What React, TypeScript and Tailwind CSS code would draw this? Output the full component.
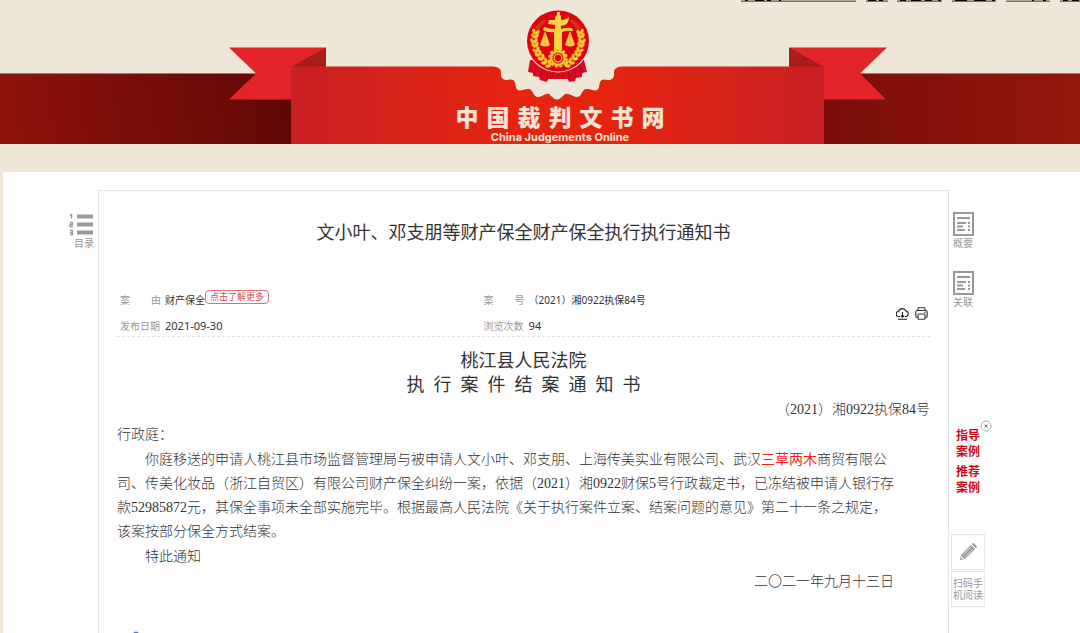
import type { ReactNode } from "react";

const siteName = ["中", "国", "裁", "判", "文", "书", "网"];
const grains = [
    [-10, 23, 66], [-14, 20, 55], [-17, 16, 45], [-20, 12, 35], [-22, 8, 24], [-23, 3, 12], [-24, -1, 2], [-23, -6, -8], [-22, -10, -14],
];

function Wreath() {
    return (
        <g fill="#f6c52c">
            {grains.map(([x, y, turn]) => (
                <g key={`${x},${y}`} transform={`translate(${x} ${y}) rotate(${-turn})`}>
                    <ellipse cx="-2" cy="0" rx="1.7" ry="2.9" transform="rotate(-32)" />
                    <ellipse cx="2" cy="0" rx="1.7" ry="2.9" transform="rotate(32)" />
                </g>
            ))}
        </g>
    );
}

function Emblem() {
    return (
        <g transform="translate(558 41)">
            <path d="M-28 19 L-30 31 L-25 32 L-25 35 L-19 36 L-18 39 L-11 41 L-10 38 L10 38 L11 41 L17 40 L18 37 L24 36 L24 32 L29 31 L26 19Z" fill="#d80b24" />
            <path d="M-22 25 L-24 33 M-16 28 L-17 36 M-10 31 L-11 39 M-5 32 V38 M0 32 V38 M5 32 V38 M10 31 L11 39 M16 28 L17 36 M22 25 L24 33" stroke="#a90d1c" strokeWidth="1" />
            <ellipse rx="32" ry="31.500" fill="#f5e9dc" />
            <ellipse rx="31" ry="30.500" fill="#e3000f" />
            <path d="M-23 -13 L-16 -21 H-11 L-20 -10Z M23 -13 L16 -21 H11 L20 -10Z" fill="#c9371c" />
            <Wreath />
            <g transform="scale(-1 1)">
                <Wreath />
            </g>
            <g fill="#f8d53c">
                <path d="M-1 -29 H2 V-26 L3 -25 V-21 Q8 -21 11 -24 Q11 -18 7 -16 L3 -15 V-12 Q9 -14 14 -13 L15 -10 Q9 -11 4 -9 V12 H-4 V-9 Q-9 -8 -15 -11 L-14 -14 Q-8 -12 -3 -12 V-16 L-10 -17 L-9 -21 H-3 V-24 L-1 -26Z" />
                <path d="M-13 -10 L-18 4 Q-13 7 -8 4Z M12 -10 L7 4 Q12 7 17 4Z" />
            </g>
            <path d="M-13 -5 V4 M12 -5 V4" stroke="#e8ac2c" strokeWidth="1" />
            <circle cy="17" r="8.500" fill="#e3000f" stroke="#f6c52c" strokeWidth="2.500" strokeDasharray="3 1.450" />
            <circle cy="17" r="8" fill="#f6c52c" />
            <circle cy="17" r="5.500" fill="#e3000f" />
            <circle cy="17" r="3.800" fill="none" stroke="#f6c52c" strokeWidth="1.300" />
        </g>
    );
}

function Ribbon() {
    return (
        <svg viewBox="229 0 658 144" className="h-36 w-[658px]" aria-hidden="true">
            <defs>
                <linearGradient id="front" x1="0" x2="1">
                    <stop offset="0" stopColor="#c92022" />
                    <stop offset=".4" stopColor="#e52411" />
                    <stop offset=".6" stopColor="#e62410" />
                    <stop offset="1" stopColor="#c82023" />
                </linearGradient>
            </defs>
            <path d="M229 47.500 H326 V67 H292 V99.500 H229 L256 73.500Z" fill="#e32428" />
            <path d="M887 47.500 H789 V67 H824 V99.500 H886 L860 73.500Z" fill="#e32428" />
            <path d="M326 47.500 V67 H291Z" fill="#a81c1b" />
            <path d="M789 47.500 V67 H824Z" fill="#a81c1b" />
            <rect x="492" y="66" width="131" height="36" fill="#eee7d8" />
            <path
                d="M291 66.500 H493 Q501 67 501 72 Q500 80 507 80 C515 78 515 82 516 87 C518 94 524 88 529 89 C534 90 533 98 539 97 C544 96 548 91 551 96 Q557 103 563 96 C567 91 571 96 576 97 C582 98 581 90 586 89 C591 88 597 94 599 87 C600 82 600 78 608 80 Q615 80 614 72 Q614 67 622 66.500 H824 V144 H291Z"
                fill="url(#front)"
            />
            <Emblem />
        </svg>
    );
}

function CutLinks() {
    const links = [[1, 115], [126, 22], [157, 45], [212, 44], [266, 44], [320, 20]];
    const ink = [[5, 3], [15, 9], [27, 4], [39, 2], [128, 8], [139, 4], [160, 6], [171, 10], [185, 7], [198, 3], [215, 12], [234, 12], [252, 3], [292, 2], [303, 3], [323, 5], [332, 7]];
    return (
        <svg viewBox="0 0 340 2" className="absolute right-0 top-0 h-0.5 w-[340px]" aria-hidden="true">
            {links.map(([x, w]) => (
                <g key={x}>
                    <rect x={x} width={w} height="1" fill="#a9a494" />
                    <rect x={x} y="1" width={w} height="1" fill="#777266" />
                </g>
            ))}
            {ink.map(([x, w]) => <rect key={x} x={x} width={w} height="1" fill="#000" />)}
        </svg>
    );
}

function Header() {
    return (
        <header className="relative flex h-36 flex-col justify-end overflow-hidden">
            <CutLinks />
            <div className="flex h-[71px] border-t border-[#9c7c6c]">
                <div className="flex-1 bg-[linear-gradient(80deg,#8f130b,#5e0706_56%)]" />
                <div className="flex-1 bg-[linear-gradient(90deg,#780e0a_52%,#94170b)]" />
            </div>
            <div className="absolute inset-0 flex justify-center pl-9">
                <Ribbon />
            </div>
            <div className="absolute inset-x-0 bottom-0 flex flex-col items-center pl-10 text-[#f3e3d3]">
                <h1 className="flex gap-2 font-['Noto_Sans_CJK_SC',sans-serif] text-[23px] font-black leading-7">
                    {siteName.map((char) => <span key={char}>{char}</span>)}
                </h1>
                <p className="font-['Inter',sans-serif] text-[11px] font-bold leading-[14px]">China Judgements Online</p>
            </div>
        </header>
    );
}

function ListIcon() {
    return (
        <svg viewBox="0 0 25 24" className="h-6 w-[25px]" fill="none" stroke="#999" aria-hidden="true">
            <path d="M8 4.500H24M8 12.500H24M8 20.500H24" strokeWidth="4" />
            <path d="M1 3.500L2.500 2.500V6.500M1 10.500H3.500V12.500H1V14.500H4M1 18.500H3.500V22.500H1M1 20.500H3.500" strokeWidth="1.300" />
        </svg>
    );
}

function SheetIcon() {
    return (
        <svg viewBox="0 0 21 24" className="h-6 w-[21px]" fill="none" stroke="#999" aria-hidden="true">
            <rect x="1" y="1" width="19" height="22" strokeWidth="2" />
            <path d="M4 6H17M4 11H13M15 11H17M4 14.500H10M15 14.500H17M4 18H12M15 18H17" strokeWidth="2" />
        </svg>
    );
}

function PencilIcon() {
    return (
        <svg viewBox="0 0 18 18" className="size-[18px]" aria-hidden="true">
            <path d="M1 17L2 12L12 2L16 6L6 16Z" fill="#999" />
            <path d="M13 1L14 0Q15 0 18 4L17 5Z" fill="#888" />
            <path d="M4 12L12 4M6 14L14 6" stroke="#ddd" strokeWidth="1" />
            <path d="M2.500 12.500L5.500 15.500L3 16L2 15Z" fill="#e5e5e5" />
        </svg>
    );
}

function RailLink({ label, children }: { label: string; children: ReactNode }) {
    return (
        <a href="#" className="flex flex-col items-start text-[10px] leading-[14px] text-[#999]">
            {children}
            {label}
        </a>
    );
}

function Meta() {
    return (
        <div className="flex items-center border-b border-dashed border-[#e2e2e2] pl-[3px] pr-0.5 text-[10px] text-[#333]">
            <dl className="flex w-[45%] flex-col gap-1.5 leading-5">
                <div className="flex gap-1">
                    <dt className="flex w-[41px] justify-between text-[#999]"><span>案</span><span>由</span></dt>
                    <dd className="flex items-start">
                        财产保全
                        <a href="#" className="rounded-sm border border-[#e07070] px-1 text-[9px] leading-3 text-[#cf4a4a]">点击了解更多</a>
                    </dd>
                </div>
                <div className="flex gap-1">
                    <dt className="w-[41px] text-[#999]">发布日期</dt>
                    <dd className="text-[11px]">2021-09-30</dd>
                </div>
            </dl>
            <dl className="flex flex-1 flex-col gap-1.5 leading-5">
                <div className="flex gap-1">
                    <dt className="flex w-[41px] justify-between text-[#999]"><span>案</span><span>号</span></dt>
                    <dd>（2021）湘0922执保84号</dd>
                </div>
                <div className="flex gap-1">
                    <dt className="w-[41px] text-[#999]">浏览次数</dt>
                    <dd className="text-[11px]">94</dd>
                </div>
            </dl>
            <div className="flex gap-1.5">
                <button type="button" aria-label="下载">
                    <svg viewBox="0 0 13 13" className="size-[13px]" fill="none" stroke="#222" strokeWidth="1.100">
                        <path d="M4 9.500H3A2.500 2.500 0 0 1 2.500 4.500A4 4 0 0 1 10 4A2.800 2.800 0 0 1 10 9.500H9M6.500 5V10M4.800 8.500L6.500 10.200L8.200 8.500M2 12.300H11" />
                    </svg>
                </button>
                <button type="button" aria-label="打印">
                    <svg viewBox="0 0 13 13" className="size-[13px]" fill="none" stroke="#333" strokeWidth="1.100">
                        <path d="M3 3.500V1.500Q3 .8 3.700 .8H9.300Q10 .8 10 1.500V3.500M3 10.500H2Q.8 10.500 .8 9.300V5Q.8 3.500 2.300 3.500H10.700Q12.200 3.500 12.200 5V9.300Q12.200 10.500 11 10.500H10" />
                        <rect x="3" y="7" width="7" height="5.300" rx=".8" />
                        <path d="M9 5.300H10.500" />
                    </svg>
                </button>
            </div>
        </div>
    );
}

function Judgement() {
    return (
        <div className="mt-3 flex flex-col gap-px font-['Liberation_Serif','Noto_Sans_CJK_SC',serif] text-sm font-light leading-6 text-[#333]">
            <div className="text-center text-lg font-normal leading-6">
                <p>桃江县人民法院</p>
                <p>执&ensp;行&ensp;案&ensp;件&ensp;结&ensp;案&ensp;通&ensp;知&ensp;书</p>
            </div>
            <p className="text-right">（2021）湘0922执保84号</p>
            <p>行政庭：</p>
            <p className="indent-[2em]">
                你庭移送的申请人桃江县市场监督管理局与被申请人文小叶、邓支朋、上海传美实业有限公司、武汉<span className="font-normal text-[#ff1a1a]">三草两木</span>商贸有限公<br />
                司、传美化妆品（浙江自贸区）有限公司财产保全纠纷一案，依据（2021）湘0922财保5号行政裁定书，已冻结被申请人银行存<br />
                款52985872元，其保全事项未全部实施完毕。根据最高人民法院《关于执行案件立案、结案问题的意见》第二十一条之规定，<br />
                该案按部分保全方式结案。
            </p>
            <p className="indent-[2em]">特此通知</p>
            <p className="pr-9 text-right">二〇二一年九月十三日</p>
        </div>
    );
}

export default function App() {
    return (
        <div lang="zh-CN" className="flex min-h-screen flex-col bg-[#eee7d8] font-['Noto_Sans','Noto_Sans_CJK_SC',sans-serif]">
            <Header />
            <main className="ml-[3px] mt-7 flex flex-1 bg-white pt-[18px]">
                <nav className="flex w-[95px] justify-end pr-1 pt-[22px]">
                    <a href="#" className="flex flex-col items-end text-[10px] leading-[14px] text-[#999]">
                        <ListIcon />
                        目录
                    </a>
                </nav>
                <article className="flex flex-1 flex-col border-x border-t border-[#e4e4e4] px-[18px] pt-[27px]">
                    <h2 className="mb-11 text-center text-lg leading-7 text-[#333]">文小叶、邓支朋等财产保全财产保全执行执行通知书</h2>
                    <Meta />
                    <Judgement />
                    <svg viewBox="0 0 6 2" className="ml-4 mt-auto h-0.5 w-1.5" aria-hidden="true">
                        <path d="M0 2Q3 -1 6 2Z" fill="#3f7fe8" />
                    </svg>
                </article>
                <aside className="w-[131px] pt-[22px]">
                    <div className="flex flex-col gap-[21px] pl-1">
                        <RailLink label="概要"><SheetIcon /></RailLink>
                        <RailLink label="关联"><SheetIcon /></RailLink>
                    </div>
                    <div className="mt-[119px] flex pl-[7px] text-xs font-bold leading-4 text-[#cc0a14]">
                        <div className="flex flex-col gap-1">
                            <a href="#">指导<br />案例</a>
                            <a href="#">推荐<br />案例</a>
                        </div>
                        <button type="button" aria-label="关闭" className="-mt-2 self-start">
                            <svg viewBox="0 0 12 12" className="size-3" fill="none" stroke="#aaa">
                                <circle cx="6" cy="6" r="5" />
                                <path d="M4.500 4.500L7.500 7.500M7.500 4.500L4.500 7.500" stroke="#666" />
                            </svg>
                        </button>
                    </div>
                    <div className="ml-0.5 mt-[38px] flex w-[34px] flex-col gap-px text-[10px] leading-3 text-[#999]">
                        <button type="button" aria-label="批注" className="flex h-9 items-center justify-center border border-[#e8e8e8]">
                            <PencilIcon />
                        </button>
                        <button type="button" className="flex h-9 items-center justify-center border border-[#e8e8e8]">
                            <span>扫码手<br />机阅读</span>
                        </button>
                    </div>
                </aside>
            </main>
        </div>
    );
}
